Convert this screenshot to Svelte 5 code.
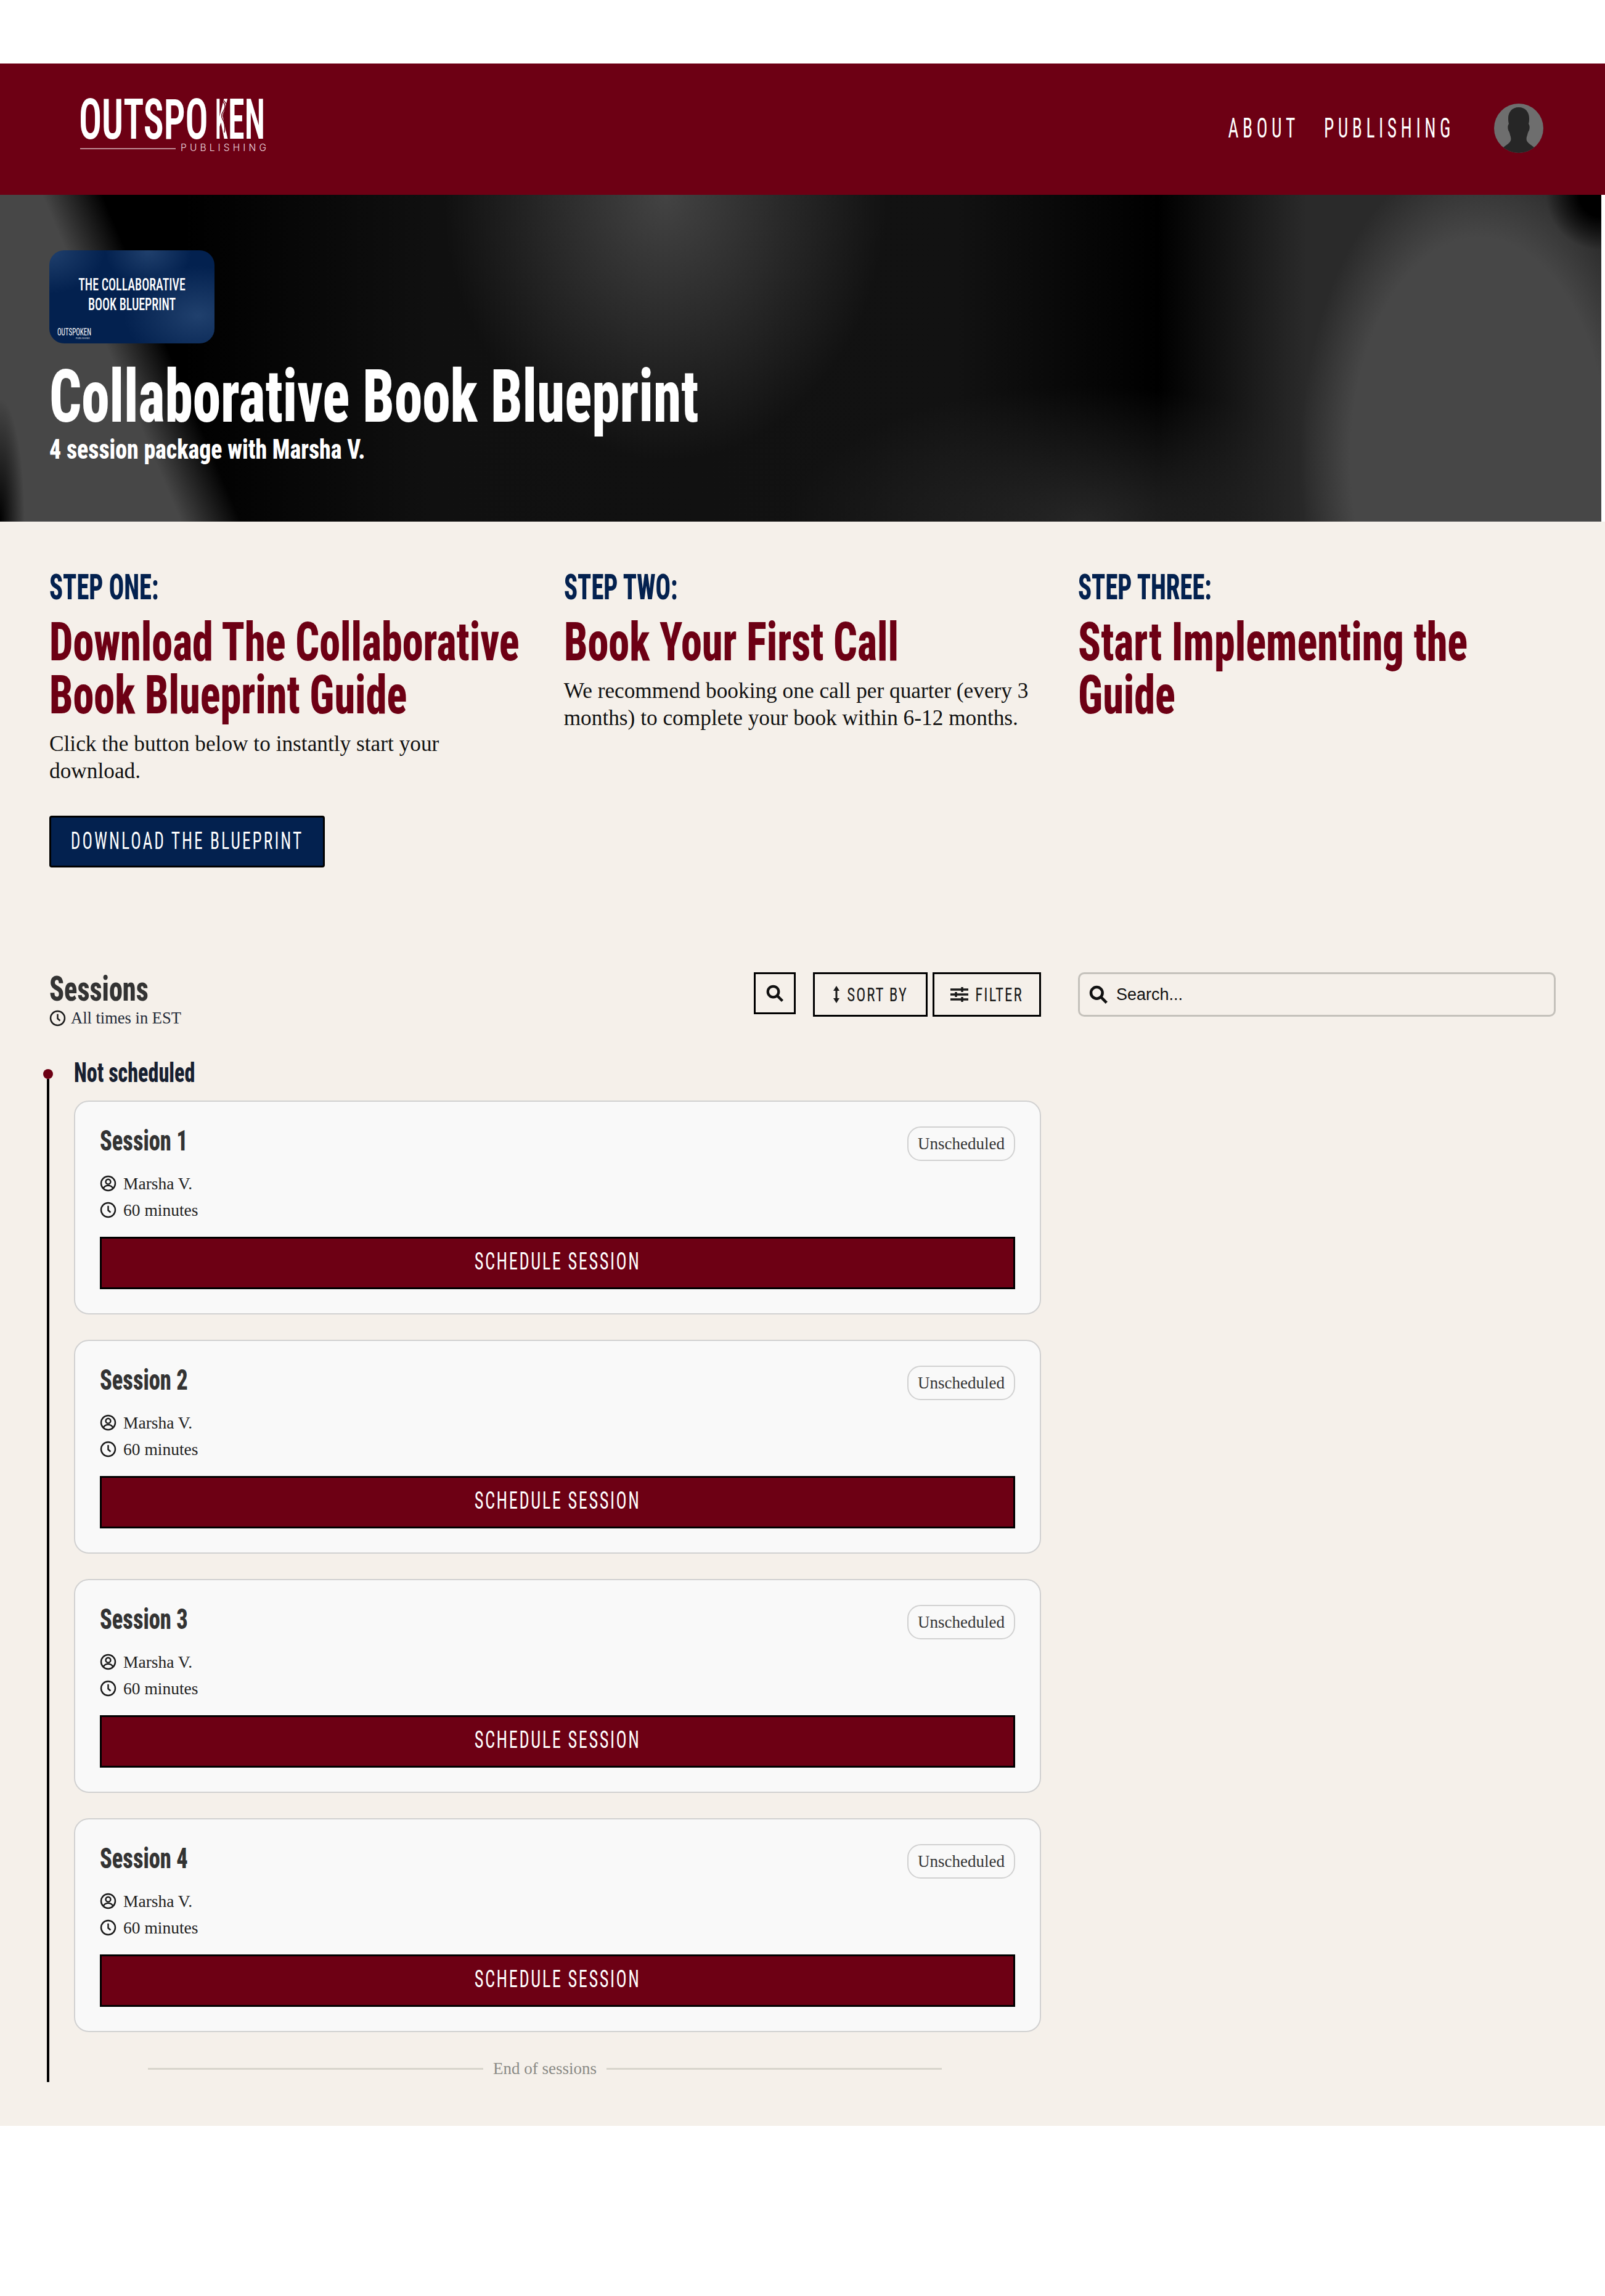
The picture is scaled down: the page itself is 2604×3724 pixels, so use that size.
<script>
  const sessions = [1, 2, 3, 4]
</script>

<div class="page">
  <header class="topbar">
    <svg class="logo" width="310" height="110" viewBox="0 0 310 110" role="img" aria-label="Outspoken Publishing">
      <text class="logo-main" y="82" transform="scale(0.8 1)"><tspan x="2.500" textLength="262" lengthAdjust="spacingAndGlyphs">OUTSPO</tspan><tspan x="279" textLength="25" lengthAdjust="spacingAndGlyphs">K</tspan><tspan x="305" textLength="75" lengthAdjust="spacingAndGlyphs">EN</tspan></text>
      <path d="M232 18c7 6 9 12 5 18-3 5-5 9-2 14 3 5 5 11 3 22M237 20c6 6 6 11 2 17-3 4-4 9-1 13 3 5 4 10 3 20" fill="none" stroke="#6d0014" stroke-width="1.4" />
      <rect x="4" y="97.500" width="155" height="1.500" fill="#d9b8bd" />
      <text class="logo-sub" x="167" y="102" textLength="139" lengthAdjust="spacing">PUBLISHING</text>
    </svg>
    <nav class="nav">
      <a href="#about">ABOUT</a>
      <a href="#publishing">PUBLISHING</a>
      <svg class="avatar" width="80" height="80" viewBox="0 0 80 80" aria-hidden="true">
        <clipPath id="av"><circle cx="40" cy="40" r="40" /></clipPath>
        <circle cx="40" cy="40" r="40" fill="#6e6e6e" />
        <path clip-path="url(#av)" d="M40 6c-11 0-17 8-17 18 0 3 0 5 1 9-2 2-2 7-1 10 1 2 2 3 3 8 1 3 2 5 1 9-1 3-4 5-8 8l-8 6v10h58v-10l-8-6c-4-3-7-5-8-8-1-4 0-6 1-9 1-5 2-6 3-8 1-3 1-8-1-10 1-4 1-6 1-9 0-10-6-18-17-18z" fill="#262626" />
      </svg>
    </nav>
  </header>

  <section class="hero">
    <div class="cover">
      <div class="cover-title">THE COLLABORATIVE<br />BOOK BLUEPRINT</div>
      <div class="cover-logo">OUTSPOKEN</div>
      <div class="cover-sub">PUBLISHING</div>
    </div>
    <h1>Collaborative Book Blueprint</h1>
    <p class="hero-sub">4 session package with Marsha V.</p>
  </section>

  <main class="content">
    <div class="steps">
      <div class="step">
        <div class="step-label">STEP ONE:</div>
        <h2>Download The Collaborative Book Blueprint Guide</h2>
        <p>Click the button below to instantly start your<br />download.</p>
        <button class="download"><span>DOWNLOAD THE BLUEPRINT</span></button>
      </div>
      <div class="step">
        <div class="step-label">STEP TWO:</div>
        <h2>Book Your First Call</h2>
        <p>We recommend booking one call per quarter (every 3 months) to complete your book within 6-12 months.</p>
      </div>
      <div class="step">
        <div class="step-label">STEP THREE:</div>
        <h2>Start Implementing the Guide</h2>
      </div>
    </div>

    <div class="lower">
      <div class="sessions">
        <div class="sessions-head">
          <div>
            <h3>Sessions</h3>
            <div class="tz">
              <svg class="ico" viewBox="0 0 24 24"><circle cx="12" cy="12" r="10.2" /><path d="M12 6v6.500l3.500 3" /></svg>
              All times in EST
            </div>
          </div>
          <div class="tools">
            <button class="tool square" aria-label="Search">
              <svg class="search-ico" viewBox="0 0 24 24"><circle cx="10" cy="10" r="7" /><path d="M15.500 15.500L22 22" /></svg>
            </button>
            <button class="tool sort">
              <svg width="12" height="28" viewBox="0 0 12 28"><path d="M6 0l5 8H1zM6 28l5-8H1z" fill="#1a1a1a" /><rect x="4.500" y="6" width="3" height="16" fill="#1a1a1a" /></svg>
              <span>SORT BY</span>
            </button>
            <button class="tool filter">
              <svg width="29" height="24" viewBox="0 0 29 24"><path d="M0 4h29M0 12h29M0 20h29" stroke="#1a1a1a" stroke-width="3.500" /><path d="M19 0v8M9 8v8M19 16v8" stroke="#1a1a1a" stroke-width="3.500" /></svg>
              <span>FILTER</span>
            </button>
          </div>
        </div>

        <div class="timeline">
          <div class="dot"></div>
          <h4>Not scheduled</h4>
          {#each sessions as n (n)}
            <article class="card">
              <div class="card-top">
                <div class="card-title">Session {n}</div>
                <span class="badge">Unscheduled</span>
              </div>
              <div class="meta">
                <svg class="ico" viewBox="0 0 24 24"><circle cx="12" cy="12" r="10.2" /><circle cx="12" cy="9.500" r="3.500" /><path d="M5 19c1.500-3 4-4 7-4s5.500 1 7 4" /></svg>
                Marsha V.
              </div>
              <div class="meta">
                <svg class="ico" viewBox="0 0 24 24"><circle cx="12" cy="12" r="10.200" /><path d="M12 6v6.500l3.500 3" /></svg>
                60 minutes
              </div>
              <button class="schedule"><span>SCHEDULE SESSION</span></button>
            </article>
          {/each}
          <div class="end"><span></span>End of sessions<span></span></div>
        </div>
      </div>

      <label class="searchbox">
        <svg class="search-ico big" viewBox="0 0 24 24"><circle cx="10" cy="10" r="7" /><path d="M15.500 15.500L22 22" /></svg>
        <input placeholder="Search..." />
      </label>
    </div>
  </main>
</div>

<style>
  :global(body) {
    margin: 0;
    background: #fff;
  }
  .page {
    padding-top: 103px;
    padding-bottom: 277px;
    font-family: "Liberation Serif", serif;
  }
  /* no condensed display face here, so Roboto at its narrowest, squeezed further */
  h1, h2, h3, h4, .hero-sub, .step-label, .card-title {
    font-family: Roboto, "Open Sans", sans-serif;
    font-stretch: 75%;
    font-weight: 800;
    transform: scaleX(0.775);
    transform-origin: 0 0;
    white-space: nowrap;
  }
  .topbar {
    height: 213px;
    background: #6d0014;
    display: flex;
    justify-content: space-between;
    align-items: flex-start;
    box-sizing: border-box;
    padding: 0 100px 0 126px;
  }
  .logo {
    margin-top: 40px;
    overflow: visible;
  }
  .logo-main {
    font-family: Roboto, sans-serif;
    font-stretch: 75%;
    font-weight: 600;
    font-size: 90px;
    fill: #fff;
  }
  .logo-sub {
    font-family: Inter, sans-serif;
    font-weight: 300;
    font-size: 15.500px;
    fill: #f0dfe2;
  }
  .nav {
    display: flex;
    align-items: center;
    gap: 40px;
    margin-top: 65px;
  }
  .nav a {
    display: block;
    font-family: Roboto, sans-serif;
    font-stretch: 75%;
    font-size: 29.500px;
    letter-spacing: 6.500px;
    line-height: 40px;
    color: #fff;
    text-decoration: none;
    transform: scaleY(1.48);
  }
  .avatar {
    margin-left: 24px;
  }
  .hero {
    height: 530px;
    width: 2598px;
    box-sizing: border-box;
    padding: 90px 80px 0;
    color: #fff;
    background:
      radial-gradient(circle 90px at 2598px 0, #000 40%, rgba(0, 0, 0, 0) 100%),
      radial-gradient(ellipse 40px 200px at 0 530px, #000, rgba(0, 0, 0, 0) 100%),
      radial-gradient(ellipse 290px 500px at 2400px 430px, #474747 0 72%, rgba(71, 71, 71, 0) 100%),
      radial-gradient(ellipse 360px 430px at 1080px 0, #434343, rgba(67, 67, 67, 0) 100%),
      radial-gradient(ellipse 480px 220px at 1760px 530px, #262626, rgba(38, 38, 38, 0) 100%),
      linear-gradient(67deg, #474747 270px, rgba(71, 71, 71, 0) 360px),
      linear-gradient(90deg, #000 300px, #101010 700px, #121212 1550px, #000 1880px, #2a2a2a 2120px);
  }
  .cover {
    width: 268px;
    height: 151px;
    border-radius: 24px;
    box-sizing: border-box;
    padding-bottom: 8px;
    background:
      radial-gradient(ellipse 70px 60px at 60% 0, #20406d, rgba(32, 64, 109, 0)),
      radial-gradient(ellipse 90px 70px at 0 0, #20406d, rgba(32, 64, 109, 0)),
      radial-gradient(ellipse 120px 80px at 90% 70%, #20406d, rgba(32, 64, 109, 0)),
      #03214f;
    display: flex;
    align-items: center;
    justify-content: center;
    text-align: center;
    position: relative;
  }
  .cover-title {
    font-family: Roboto, sans-serif;
    font-stretch: 75%;
    font-weight: 500;
    font-size: 20px;
    line-height: 22.500px;
    transform: scaleY(1.38);
  }
  .cover-logo {
    position: absolute;
    left: 13px;
    top: 125px;
    font-family: Roboto, sans-serif;
    font-stretch: 75%;
    font-size: 11px;
    line-height: 12px;
    transform: scaleY(1.42);
    transform-origin: 0 0;
  }
  .cover-sub {
    position: absolute;
    left: 43px;
    top: 141px;
    font-family: Inter, sans-serif;
    font-size: 3px;
    line-height: 4px;
    letter-spacing: 0.5px;
  }
  h1 {
    margin: 28px 0 0;
    font-size: 118px;
    line-height: 118px;
  }
  .hero-sub {
    margin: 0;
    font-size: 45px;
    line-height: 52px;
    transform: scaleX(0.84);
  }
  .content {
    background: #f5f0ea;
    padding: 77px 80px 71px;
  }
  .steps {
    display: grid;
    grid-template-columns: repeat(3, 1fr);
    gap: 60px;
    margin-bottom: 170px;
  }
  .step-label {
    font-size: 58px;
    line-height: 58px;
    color: #03214f;
    transform: scaleX(0.7);
  }
  h2 {
    margin: 17px 0 0;
    width: 130%;
    white-space: normal;
    font-size: 88px;
    line-height: 86px;
    color: #6d0014;
  }
  .step p {
    margin: 15px 0 0;
    font-size: 35.300px;
    line-height: 44px;
    color: #111;
  }
  .download {
    display: flex;
    align-items: center;
    justify-content: center;
    margin-top: 50px;
    width: 447px;
    height: 84px;
    box-sizing: border-box;
    background: #03214f;
    border: 3px solid #000;
    border-radius: 4px;
    color: #fff;
    font-family: Roboto, sans-serif;
    font-stretch: 75%;
    font-size: 27.500px;
    letter-spacing: 3px;
    padding: 0 0 4px;
  }
  .download span, .schedule span, .tool span {
    display: block;
    transform: scaleY(1.27);
  }
  .download span {
    transform: scaleY(1.38);
  }
  .schedule span {
    transform: scaleY(1.33);
  }
  .lower {
    display: grid;
    grid-template-columns: 1609px 775px;
    gap: 60px;
    align-items: start;
  }
  .sessions-head {
    display: flex;
    justify-content: space-between;
    align-items: flex-start;
  }
  h3 {
    margin: 0;
    font-size: 56px;
    line-height: 54px;
    color: #333;
    transform: scaleX(0.79);
  }
  .tz {
    display: flex;
    align-items: center;
    gap: 8px;
    margin-top: 5px;
    font-size: 26.500px;
    line-height: 30px;
    color: #1f2937;
  }
  .ico {
    width: 27px;
    height: 27px;
    fill: none;
    stroke: #1a1a1a;
    stroke-width: 2.200;
    flex: none;
  }
  .tools {
    display: flex;
    align-items: flex-start;
    gap: 8px;
  }
  .tool {
    height: 72px;
    box-sizing: border-box;
    background: transparent;
    border: 3px solid #000;
    display: flex;
    align-items: center;
    justify-content: center;
    gap: 11px;
    color: #1a1a1a;
    font-family: Roboto, sans-serif;
    font-stretch: 75%;
    font-size: 25px;
    letter-spacing: 2px;
    padding: 0;
  }
  .square {
    width: 68px;
    height: 68px;
    margin-right: 20px;
  }
  .sort {
    width: 186px;
  }
  .filter {
    width: 176px;
  }
  .search-ico {
    width: 30px;
    height: 30px;
    fill: none;
    stroke: #111;
    stroke-width: 3.400;
  }
  .search-ico.big {
    width: 32px;
    height: 32px;
    flex: none;
  }
  .timeline {
    position: relative;
    margin-top: 52px;
    padding-left: 40px;
    padding-bottom: 4px;
  }
  .timeline::before {
    content: "";
    position: absolute;
    left: -4px;
    top: 32px;
    bottom: 0;
    width: 4px;
    background: #000;
  }
  .dot {
    position: absolute;
    left: -10px;
    top: 16px;
    width: 16px;
    height: 16px;
    border-radius: 50%;
    background: #6d0014;
  }
  h4 {
    margin: 0 0 23px;
    font-size: 44px;
    line-height: 44px;
    color: #182030;
  }
  .card {
    box-sizing: border-box;
    height: 347px;
    margin-bottom: 41px;
    background: #f9f9f9;
    border: 2px solid #d1d1d1;
    border-radius: 24px;
    padding: 40px;
  }
  .card-top {
    display: flex;
    justify-content: space-between;
    align-items: flex-start;
    height: 71px;
  }
  .card-title {
    font-size: 47px;
    line-height: 46px;
    color: #333;
  }
  .badge {
    box-sizing: border-box;
    width: 175px;
    height: 56px;
    border: 2px solid #d1d1d1;
    border-radius: 22px;
    display: flex;
    align-items: center;
    justify-content: center;
    font-size: 27px;
    color: #333;
  }
  .meta {
    display: flex;
    align-items: center;
    gap: 11px;
    height: 43px;
    font-size: 27.500px;
    color: #222;
  }
  .schedule {
    display: flex;
    align-items: center;
    justify-content: center;
    box-sizing: border-box;
    width: 100%;
    height: 85px;
    margin-top: 22px;
    background: #6d0014;
    border: 3px solid #000;
    color: #fff;
    font-family: Roboto, sans-serif;
    font-stretch: 75%;
    font-size: 28.500px;
    letter-spacing: 2.500px;
    padding: 0 0 5px;
  }
  .end {
    display: flex;
    align-items: center;
    gap: 16px;
    width: 1288px;
    height: 36px;
    margin-left: 120px;
    font-size: 27px;
    color: #8a8a85;
  }
  .end span {
    flex: 1;
    height: 3px;
    background: #d8d5cc;
  }
  .searchbox {
    box-sizing: border-box;
    height: 72px;
    display: flex;
    align-items: center;
    gap: 13px;
    padding: 0 14px;
    border: 3px solid #c4c1bb;
    border-radius: 10px;
  }
  .searchbox input {
    flex: 1;
    border: 0;
    background: transparent;
    outline: 0;
    font-family: "Liberation Sans", sans-serif;
    font-size: 27px;
    padding: 0;
  }
  .searchbox input::placeholder {
    color: #111;
    opacity: 1;
  }
</style>
